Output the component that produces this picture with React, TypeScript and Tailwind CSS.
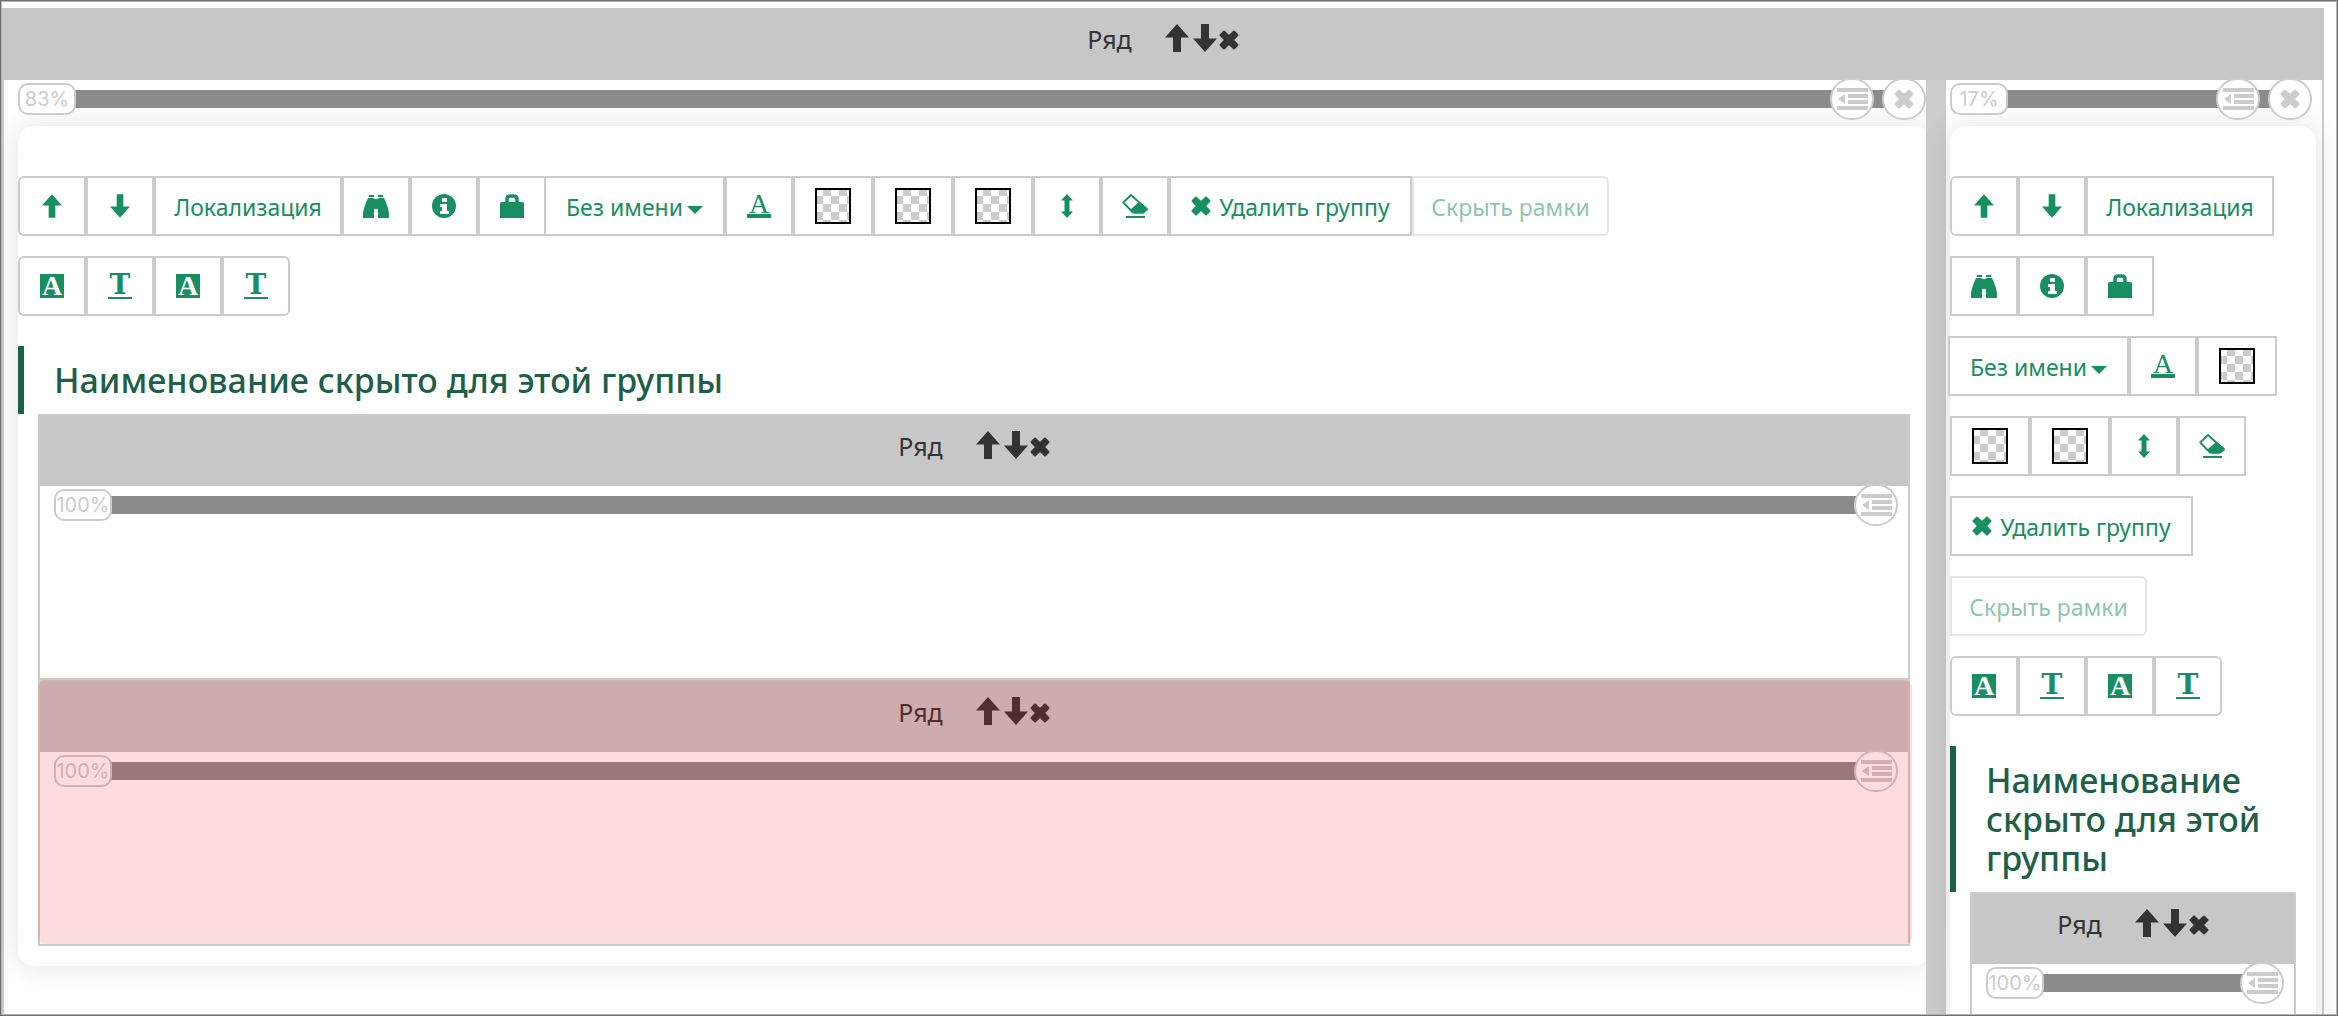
import type { ReactNode } from 'react';
import clsx from 'clsx';

interface IconProps {
  className?: string;
}

const ArrowUp = ({ className }: IconProps) => (
  <svg viewBox="0 0 24 28" className={className} fill="currentColor" aria-hidden="true">
    <path d="M12 0 24 13.5H16V28H8V13.5H0z" />
  </svg>
);

const ArrowDown = ({ className }: IconProps) => (
  <svg viewBox="0 0 24 28" className={className} fill="currentColor" aria-hidden="true">
    <path d="M12 28 0 14.5H8V0H16V14.5H24z" />
  </svg>
);

const Cross = ({ className }: IconProps) => (
  <svg viewBox="0 0 20 20" className={className} fill="currentColor" stroke="currentColor" strokeWidth="2" strokeLinejoin="round" aria-hidden="true">
    <path d="M5 1.5 10 6.2 15 1.5 18.5 5 13.8 10 18.5 15 15 18.5 10 13.8 5 18.5 1.5 15 6.2 10 1.5 5z" />
  </svg>
);

const Outdent = () => (
  <svg viewBox="0 0 31 22" className="h-[22px] w-[31px]" fill="currentColor" aria-hidden="true">
    <path d="M0 0h31v4H0zM11 6h20v4H11zM11 12h20v4H11zM0 18h31v4H0zM1 11l7-5v10z" />
  </svg>
);

const Binoculars = () => (
  <svg viewBox="0 0 26 24" className="h-6 w-[26px]" fill="currentColor" aria-hidden="true">
    <path d="M6 1h5v2H6zM15 1h5v2h-5zM5 4h6v20H9V24H0v-5C1 13 3 8 5 4zM21 4h-6v20h11v-5c-1-6-3-11-5-15zM11 5h4v10h-4z" />
  </svg>
);

const Info = () => (
  <svg viewBox="0 0 24 24" className="size-6" aria-hidden="true">
    <circle cx="12" cy="12" r="12" fill="currentColor" />
    <path d="M10 4h5v4h-5zM8 10h7v7h2v3H8v-3h2v-4H8z" fill="#fff" />
  </svg>
);

const Bag = () => (
  <svg viewBox="0 0 24 24" className="size-6" aria-hidden="true">
    <path d="M7 9V5.5Q7 2 10 2h4q3 0 3 3.5V9" fill="none" stroke="currentColor" strokeWidth="3.5" />
    <path d="M1.5 8h21q1.5 0 1.5 1.5V24H0V9.5Q0 8 1.5 8z" fill="currentColor" />
  </svg>
);

const Resize = () => (
  <svg viewBox="0 0 12 24" className="h-6 w-3" fill="currentColor" aria-hidden="true">
    <path d="M6 0l6 6.5H8.5v11H12L6 24l-6-6.5h3.5v-11H0z" />
  </svg>
);

const Eraser = () => (
  <svg viewBox="0 0 26 24" className="h-6 w-[26px]" aria-hidden="true">
    <path d="M9 1 1.200 8.500 11 18.500h10l4-3z" fill="none" stroke="currentColor" strokeWidth="1.8" strokeLinejoin="round" />
    <path d="M17 8 8.500 15.500l4 4H21l4.500-3.500v-2z" fill="currentColor" />
    <path d="M4 22h19v2H4z" fill="currentColor" />
  </svg>
);

const LetterColor = () => (
  <span className="flex w-6 flex-col items-center border-b-4 border-current font-['Liberation_Serif',serif] text-[28px] leading-5">A</span>
);

const LetterBox = () => (
  <span className="flex size-6 items-center justify-center bg-[#178f62] font-['Liberation_Serif',serif] text-[28px] leading-6 font-bold text-white">A</span>
);

const LetterLine = () => (
  <span className="flex w-6 flex-col items-center border-b-2 border-current font-['DejaVu_Serif',serif] text-[28px] leading-6 font-bold">T</span>
);

// transparent colour: 8px checkerboard
const Swatch = () => (
  <span className="block size-9 border-2 border-black bg-[conic-gradient(#ccc_25%,#fff_0_50%,#ccc_0_75%,#fff_0)] bg-size-[16px_16px] bg-position-[-2px_-2px]" />
);

interface ToolProps {
  label?: string;
  children: ReactNode;
  className?: string;
  disabled?: boolean;
}

function Tool({ label, children, className = 'w-[68px]', disabled }: ToolProps) {
  return (
    <button
      type="button"
      aria-label={label}
      disabled={disabled}
      className={clsx(
        'flex h-[60px] items-center justify-center border-2 border-[#ccc] bg-white text-[23px] whitespace-nowrap text-[#178f62]',
        disabled && 'opacity-50',
        className
      )}
    >
      {children}
    </button>
  );
}

function GroupTools() {
  return (
    <>
      <div className="flex flex-wrap gap-y-5">
        <Tool label="Вверх" className="w-[68px] rounded-l-md">
          <ArrowUp className="h-6 w-5" />
        </Tool>
        <Tool label="Вниз">
          <ArrowDown className="h-6 w-5" />
        </Tool>
        <Tool className="w-[188px]">
          <span className="mt-[2px]">Локализация</span>
        </Tool>
        <Tool label="Поиск"><Binoculars /></Tool>
        <Tool label="Информация"><Info /></Tool>
        <Tool label="Доступ"><Bag /></Tool>
        <div className="relative -ml-[2px] w-[181px]">
          <select
            aria-label="Имя группы"
            className="h-[60px] w-full appearance-none border-2 border-[#ccc] bg-white pt-[2px] pl-5 text-[23px] text-[#178f62]"
          >
            <option>Без имени</option>
          </select>
          <svg viewBox="0 0 16 8" className="pointer-events-none absolute top-[30px] right-[22px] h-2 w-4 text-[#178f62]" fill="currentColor" aria-hidden="true">
            <path d="M0 0h16L8 8z" />
          </svg>
        </div>
        <Tool label="Цвет текста"><LetterColor /></Tool>
        <Tool label="Цвет фона" className="w-20"><Swatch /></Tool>
        <Tool label="Цвет рамки" className="w-20"><Swatch /></Tool>
        <Tool label="Цвет заголовка" className="w-20"><Swatch /></Tool>
        <Tool label="Высота"><Resize /></Tool>
        <Tool label="Очистить"><Eraser /></Tool>
        <Tool className="w-[243px] gap-2">
          <Cross className="size-5" />
          <span className="mt-[2px]">Удалить группу</span>
        </Tool>
        <Tool className="w-[197px] rounded-r-md" disabled>
          <span className="mt-[2px]">Скрыть рамки</span>
        </Tool>
      </div>
      <div className="mt-5 flex">
        <Tool label="Фон названия" className="w-[68px] rounded-l-md"><LetterBox /></Tool>
        <Tool label="Текст названия"><LetterLine /></Tool>
        <Tool label="Фон значения"><LetterBox /></Tool>
        <Tool label="Текст значения" className="w-[68px] rounded-r-md"><LetterLine /></Tool>
      </div>
    </>
  );
}

function RowHeader({ className }: { className: string }) {
  return (
    <div className={clsx('flex items-center justify-center bg-[#c7c7c7] pb-2 text-[25px] text-[#333]', className)}>
      <span className="mr-[33px]">Ряд</span>
      <button type="button" aria-label="Вверх" className="mr-1 mb-1">
        <ArrowUp className="h-7 w-6" />
      </button>
      <button type="button" aria-label="Вниз" className="mr-[2px] mb-1">
        <ArrowDown className="h-7 w-6" />
      </button>
      <button type="button" aria-label="Удалить">
        <Cross className="size-5" />
      </button>
    </div>
  );
}

function RoundButton({ label, children }: { label: string; children: ReactNode }) {
  return (
    <button
      type="button"
      aria-label={label}
      className="flex h-[42px] w-11 items-center justify-center rounded-full border-2 border-[#ccc] bg-white text-[#ccc]"
    >
      {children}
    </button>
  );
}

function WidthBar({ width, removable }: { width: string; removable?: boolean }) {
  return (
    <div className="relative -mt-[2px] grid items-center">
      <div className="col-start-1 row-start-1 mx-4 h-[18px] bg-[#8b8b8b]" />
      <div className="col-start-1 row-start-1 flex items-center gap-2">
        <span className="mr-auto flex h-8 w-[58px] items-center justify-center rounded-[10px] border-2 border-[#ccc] bg-white font-['Inter',sans-serif] text-xl text-[#ccc]">
          {width}
        </span>
        <RoundButton label="Отступ"><Outdent /></RoundButton>
        {removable && (
          <RoundButton label="Удалить колонку">
            <Cross className="size-5" />
          </RoundButton>
        )}
      </div>
    </div>
  );
}

function InnerRow({ marked }: { marked?: boolean }) {
  return (
    <div className="relative border-2 border-[#ccc]">
      <RowHeader className="h-[70px]" />
      <div className="flow-root h-48 pr-[10px] pl-[14px]">
        <WidthBar width="100%" />
      </div>
      {marked && (
        <div className="pointer-events-none absolute -top-[2px] -right-1 bottom-0 -left-[2px] rounded-lg bg-[rgb(240_20_32/0.15)]" />
      )}
    </div>
  );
}

function GroupCard({ children, className }: { children: ReactNode; className?: string }) {
  return (
    <section className={clsx('mt-[6px] rounded-2xl bg-white pt-[50px] pb-5 shadow-[0_0_30px_rgb(0_0_30/0.12)]', className)}>
      <GroupTools />
      <h2 className="mt-[30px] border-l-[6px] border-[#1e5f47] pt-[15px] pb-[14px] pl-[30px] text-[34px] leading-[39px] font-medium text-[#1e5f47]">
        Наименование скрыто для этой группы
      </h2>
      <div className="px-5">{children}</div>
    </section>
  );
}

export default function App() {
  return (
    <main className="h-screen overflow-hidden border border-[#6f6f6f] bg-white font-['Noto_Sans',sans-serif]">
      <div className="flex h-full flex-col overflow-hidden border border-[#b5b5b5] pt-[6px] pr-3">
        <RowHeader className="h-[72px] shrink-0" />
        <div className="grid min-h-0 flex-1 grid-cols-[1922fr_20px_376fr] border-x-2 border-[#ccc]">
          <div className="min-w-0 pl-[14px]">
            <WidthBar width="83%" removable />
            <GroupCard className="-mr-1">
              <InnerRow />
              <InnerRow marked />
            </GroupCard>
          </div>
          <div className="relative bg-[#ccc]" />
          <div className="relative min-w-0 pl-1">
            <div className="pr-[10px]">
              <WidthBar width="17%" removable />
            </div>
            <GroupCard className="mr-[6px]">
              <InnerRow />
            </GroupCard>
          </div>
        </div>
      </div>
    </main>
  );
}
